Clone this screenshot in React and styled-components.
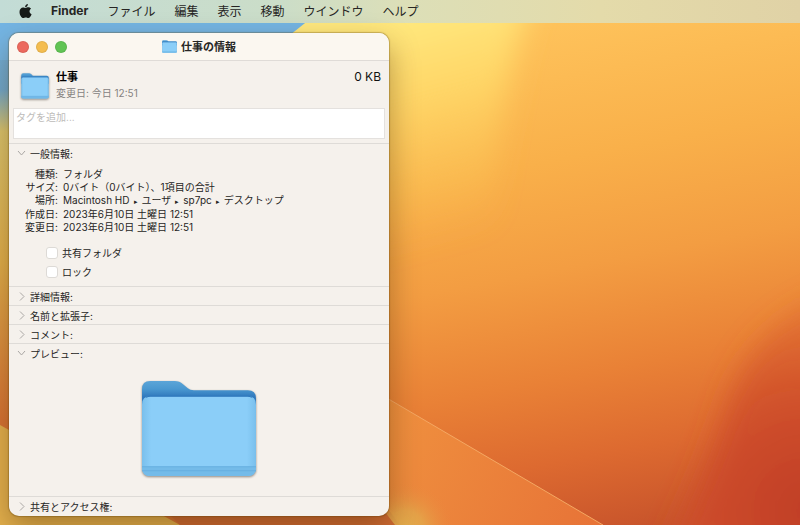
import React, { useState } from "react";
import styled, { createGlobalStyle, css } from "styled-components";

const GlobalStyle = createGlobalStyle`
  * {
    box-sizing: border-box;
  }

  body {
    margin: 0;
    background: #f5a042;
    font-family: Inter, "Noto Sans CJK JP", sans-serif;
    color: #262524;
  }

  button {
    padding: 0;
    border: 0;
    background: none;
    color: inherit;
    font: inherit;
  }
`;

const Desktop = styled.div`
  position: relative;
  min-height: 100vh;
  overflow: hidden;
`;

const WallpaperArt = styled.svg`
  position: absolute;
  inset: 0;
  width: 100%;
  height: 100%;
`;

const MenuBar = styled.nav`
  position: relative;
  display: flex;
  align-items: flex-start;
  gap: 19px;
  height: 23px;
  padding: 0 19px;
  background: linear-gradient(90deg, #c3dcd6 0%, #cbddc8 35%, #dcdfb8 50%, #e4dbaa 75%, #e0d2a6 100%);
  font-size: 12px;
`;

const MenuButton = styled.button`
  display: flex;
  flex: none;
  align-items: center;
  height: 21px;
  font-weight: ${(props) => (props.$bold ? 700 : 400)};
`;

const InfoWindow = styled.main`
  position: absolute;
  left: 9px;
  top: 33px;
  width: 380px;
  padding-bottom: 1px;
  border-radius: 10px;
  overflow: hidden;
  background: #f5f1ec;
  box-shadow:
    0 0 1px 1px rgba(90, 60, 0, 0.3),
    0 12px 30px rgba(70, 40, 0, 0.4);
`;

const TitleBar = styled.header`
  display: grid;
  grid-template-columns: 1fr auto 1fr;
  align-items: center;
  height: 28px;
  padding: 0 8px;
  border-bottom: 1px solid #dfdbd7;
  background: #fbf7f0;
`;

const TrafficLights = styled.div`
  display: flex;
  gap: 7px;
`;

const TrafficLight = styled.button`
  width: 12px;
  height: 12px;
  border-radius: 50%;
  background: ${(props) => props.$color};
  box-shadow: inset 0 0 0 1px rgba(0, 0, 0, 0.08);
`;

const WindowTitle = styled.h1`
  display: flex;
  align-items: center;
  gap: 4px;
  margin: 0;
  font-size: 11px;
  font-weight: 700;
  line-height: 16px;
`;

const Summary = styled.section`
  display: flex;
  align-items: center;
  gap: 7px;
  padding: 8px 8px 6px 12px;
`;

const SummaryText = styled.div`
  flex: 1;
`;

const ItemName = styled.h2`
  margin: 0;
  color: #000;
  font-size: 11px;
  font-weight: 700;
  line-height: 16px;
`;

const ItemSize = styled.div`
  align-self: flex-start;
  color: #111;
  font-size: 12px;
  line-height: 16px;
`;

const ItemDate = styled.div`
  color: #85827f;
  font-size: 10px;
  line-height: 17px;
`;

const TagField = styled.textarea`
  display: block;
  width: calc(100% - 8px);
  height: 31px;
  margin: 0 4px 4px;
  padding: 1px 2px;
  border: 1px solid #e4e1de;
  background: #fff;
  font: inherit;
  font-size: 10px;
  line-height: 14px;
  resize: none;

  &::placeholder {
    color: #bdbbb9;
    opacity: 1;
  }
`;

const Panel = styled.section`
  border-top: 1px solid #dedbd7;
`;

const PanelHeading = styled.h3`
  margin: 0;
  font-size: 10px;
  font-weight: 400;
`;

const PanelToggle = styled.button`
  display: flex;
  align-items: center;
  gap: 4px;
  width: 100%;
  height: 18px;
  padding-left: 8px;
  text-align: left;
`;

const InfoList = styled.dl`
  display: grid;
  grid-template-columns: 49px 1fr;
  column-gap: 5px;
  margin: 0;
  padding-top: 6px;
  font-size: 10px;
  line-height: 13px;

  dt {
    text-align: right;
    white-space: nowrap;
  }

  dd {
    margin: 0;
  }
`;

const PathArrow = styled.span`
  margin: 0 4px;
  font-size: 7px;
`;

const OptionList = styled.div`
  display: flex;
  flex-direction: column;
  align-items: flex-start;
  gap: 5px;
  padding: 12px 0 7px 37px;
`;

const Option = styled.label`
  display: flex;
  align-items: center;
  gap: 4px;
  font-size: 10px;
  line-height: 14px;
`;

const Checkbox = styled.input`
  appearance: none;
  width: 12px;
  height: 12px;
  margin: 0;
  border: 1px solid #dddad6;
  border-radius: 3px;
  background: #fff;

  &:checked {
    border-color: #2f7cf6;
    background: #2f7cf6;
  }
`;

const Preview = styled.div`
  display: flex;
  justify-content: center;
  padding: 18px 0;
`;

const FolderSvg = styled.svg`
  display: block;
  flex: none;
  ${(props) =>
    props.$shadow &&
    css`
      filter: drop-shadow(0 1px 1px rgba(60, 50, 40, 0.55));
    `}
`;

const lights = [
  { label: "閉じる", color: "#ec695e" },
  { label: "しまう", color: "#f4bd4f" },
  { label: "拡大", color: "#61c454" },
];

const menus = ["ファイル", "編集", "表示", "移動", "ウインドウ", "ヘルプ"];

const path = ["Macintosh HD", "ユーザ", "sp7pc", "デスクトップ"];

function Wallpaper() {
  return (
    <WallpaperArt viewBox="0 0 800 525" preserveAspectRatio="xMinYMin slice" aria-hidden="true">
      <defs>
        <linearGradient id="base" gradientUnits="userSpaceOnUse" x1="480" y1="10" x2="580" y2="540">
          <stop offset="0" stopColor="#ffc65e" />
          <stop offset="0.3" stopColor="#f9b04a" />
          <stop offset="0.5" stopColor="#f39d42" />
          <stop offset="0.7" stopColor="#e98136" />
          <stop offset="0.85" stopColor="#dd6a30" />
          <stop offset="1" stopColor="#c8542b" />
        </linearGradient>
        <linearGradient id="yellow" gradientUnits="userSpaceOnUse" x1="380" y1="20" x2="440" y2="240">
          <stop offset="0" stopColor="#ffe97f" />
          <stop offset="0.35" stopColor="#ffd768" />
          <stop offset="1" stopColor="#fac050" stopOpacity="0" />
        </linearGradient>
        <radialGradient id="red" gradientUnits="userSpaceOnUse" cx="810" cy="510" r="240">
          <stop offset="0" stopColor="#c03d25" />
          <stop offset="0.45" stopColor="#cd4a29" stopOpacity="0.85" />
          <stop offset="1" stopColor="#dd612d" stopOpacity="0.2" />
        </radialGradient>
        <linearGradient id="left" x1="0" y1="0" x2="0" y2="1">
          <stop offset="0" stopColor="#74b5e4" />
          <stop offset="0.17" stopColor="#6fa9d0" />
          <stop offset="0.25" stopColor="#dcc66e" />
          <stop offset="0.5" stopColor="#e2b04c" />
          <stop offset="0.8" stopColor="#d87334" />
        </linearGradient>
        <linearGradient id="ray" gradientUnits="userSpaceOnUse" x1="380" y1="400" x2="600" y2="525">
          <stop offset="0" stopColor="#f0923f" />
          <stop offset="1" stopColor="#e77337" />
        </linearGradient>
        <radialGradient id="glow" gradientUnits="userSpaceOnUse" cx="405" cy="530" r="48">
          <stop offset="0" stopColor="#e3ae4d" />
          <stop offset="0.4" stopColor="#e3a84b" stopOpacity="0.8" />
          <stop offset="1" stopColor="#ea8a3e" stopOpacity="0" />
        </radialGradient>
        <filter id="soft" x="-30%" y="-30%" width="160%" height="160%">
          <feGaussianBlur stdDeviation="14" />
        </filter>
      </defs>
      <rect width="800" height="525" fill="url(#base)" />
      <path d="M250 -60H550L530 0Q502 80 490 230L370 260L250 100Z" fill="url(#yellow)" filter="url(#soft)" />
      <path d="M840 290Q745 325 722 420Q700 490 640 600H880Z" fill="url(#red)" filter="url(#soft)" />
      <rect width="200" height="525" fill="url(#left)" />
      <path d="M0 0H334L290 35V60H0Z" fill="#74b5e4" />
      <path d="M380 394L603 525H370Z" fill="url(#ray)" />
      <path d="M380 394L603 525" stroke="#f4a762" strokeWidth="1" />
      <path d="M0 425L180 525H0Z" fill="#e4b14e" />
      <path d="M160 505L180 525H400L385 505Z" fill="#cf6a33" />
      <path d="M385 440H480V525H395L385 512Z" fill="url(#glow)" />
    </WallpaperArt>
  );
}

function AppleLogo() {
  return (
    <svg width="13" height="16" viewBox="0 0 13 16" fill="#161a18" aria-hidden="true">
      <path d="M8.9 1C9 2.8 7.6 4.2 6.1 4.2C5.9 2.6 7.4 1.1 8.9 1Z" />
      <path d="M6.6 5C7.3 5 8 4.3 9.3 4.3C10.5 4.3 11.6 5 12.1 5.8C9.8 7.2 10.2 10.3 12.6 11.2C12 12.9 10.8 15 9.3 15C8.3 15 8 14.4 6.8 14.4C5.6 14.4 5.2 15 4.3 15C2.5 15 .5 11.7 .5 8.9C.5 6 2.3 4.4 4.1 4.4C5.2 4.4 6 5 6.6 5Z" />
    </svg>
  );
}

function FolderIcon({ width, height, id, shadow }) {
  return (
    <FolderSvg
      width={width}
      height={height}
      viewBox="0 0 114 96"
      preserveAspectRatio="none"
      $shadow={shadow}
      aria-hidden="true"
    >
      <defs>
        <linearGradient id={`${id}-back`} x1="0" y1="0" x2="0" y2="1">
          <stop offset="0" stopColor="#5ba5d8" />
          <stop offset="0.2" stopColor="#4a98d0" />
          <stop offset="0.4" stopColor="#2f78bd" />
        </linearGradient>
        <linearGradient id={`${id}-front`} x1="0" y1="0" x2="1" y2="0">
          <stop offset="0" stopColor="#79bfec" />
          <stop offset="0.08" stopColor="#8bcef8" />
          <stop offset="0.92" stopColor="#8bcef8" />
          <stop offset="1" stopColor="#79bfec" />
        </linearGradient>
      </defs>
      <path d="M1 9Q1 1 9 1H33Q38 1 41 4L46 8Q48 10 52 10H105Q113 10 113 18V40H1Z" fill={`url(#${id}-back)`} />
      <path d="M1 24Q1 16 9 16H105Q113 16 113 24V86Q113 94 105 94H9Q1 94 1 86Z" fill={`url(#${id}-front)`} />
      <path d="M1 85H113V86Q113 94 105 94H9Q1 94 1 86Z" fill="#74bbe9" />
      <path d="M1 85H113M1 89H113" stroke="#66aedf" strokeWidth="1" />
      <path d="M5 17Q7 16 9 16H105Q107 16 109 17" fill="none" stroke="#2f78bd" strokeWidth="1" />
    </FolderSvg>
  );
}

function Chevron({ open }) {
  return (
    <svg width="9" height="9" viewBox="0 0 9 9" fill="none" stroke="#aaa7a4" strokeWidth="1" aria-hidden="true">
      <path d={open ? "M1 2L4.5 6L8 2" : "M3 0.5L7 4.5L3 8.5"} />
    </svg>
  );
}

function InfoPanel({ title, defaultOpen = false, children }) {
  const [open, setOpen] = useState(defaultOpen);

  return (
    <Panel>
      <PanelHeading>
        <PanelToggle aria-expanded={open} onClick={() => setOpen(!open)}>
          <Chevron open={open} />
          {title}
        </PanelToggle>
      </PanelHeading>
      {open && children}
    </Panel>
  );
}

export default function App() {
  const [tags, setTags] = useState("");

  const handleTagsChange = (e) => {
    setTags(e.target.value);
  };

  return (
    <Desktop>
      <GlobalStyle />
      <Wallpaper />
      <MenuBar>
        <MenuButton aria-label="Apple">
          <AppleLogo />
        </MenuButton>
        <MenuButton $bold>Finder</MenuButton>
        {menus.map((menu) => (
          <MenuButton key={menu}>{menu}</MenuButton>
        ))}
      </MenuBar>
      <InfoWindow>
        <TitleBar>
          <TrafficLights>
            {lights.map((light) => (
              <TrafficLight key={light.label} aria-label={light.label} $color={light.color} />
            ))}
          </TrafficLights>
          <WindowTitle>
            <FolderIcon id="title" width={15} height={13} />
            仕事の情報
          </WindowTitle>
        </TitleBar>
        <Summary>
          <FolderIcon id="item" width={28} height={26} shadow />
          <SummaryText>
            <ItemName>仕事</ItemName>
            <ItemDate>変更日: 今日 12:51</ItemDate>
          </SummaryText>
          <ItemSize>0 KB</ItemSize>
        </Summary>
        <TagField
          aria-label="タグ"
          placeholder="タグを追加..."
          value={tags}
          onChange={handleTagsChange}
        />
        <InfoPanel title="一般情報:" defaultOpen>
          <InfoList>
            <dt>種類:</dt>
            <dd>フォルダ</dd>
            <dt>サイズ:</dt>
            <dd>0バイト（0バイト）、1項目の合計</dd>
            <dt>場所:</dt>
            <dd>
              {path.map((name, index) => (
                <React.Fragment key={name}>
                  {index > 0 && <PathArrow>▸</PathArrow>}
                  {name}
                </React.Fragment>
              ))}
            </dd>
            <dt>作成日:</dt>
            <dd>2023年6月10日 土曜日 12:51</dd>
            <dt>変更日:</dt>
            <dd>2023年6月10日 土曜日 12:51</dd>
          </InfoList>
          <OptionList>
            <Option>
              <Checkbox type="checkbox" />
              共有フォルダ
            </Option>
            <Option>
              <Checkbox type="checkbox" />
              ロック
            </Option>
          </OptionList>
        </InfoPanel>
        <InfoPanel title="詳細情報:" />
        <InfoPanel title="名前と拡張子:" />
        <InfoPanel title="コメント:" />
        <InfoPanel title="プレビュー:" defaultOpen>
          <Preview>
            <FolderIcon id="preview" width={116} height={98} shadow />
          </Preview>
        </InfoPanel>
        <InfoPanel title="共有とアクセス権:" />
      </InfoWindow>
    </Desktop>
  );
}
